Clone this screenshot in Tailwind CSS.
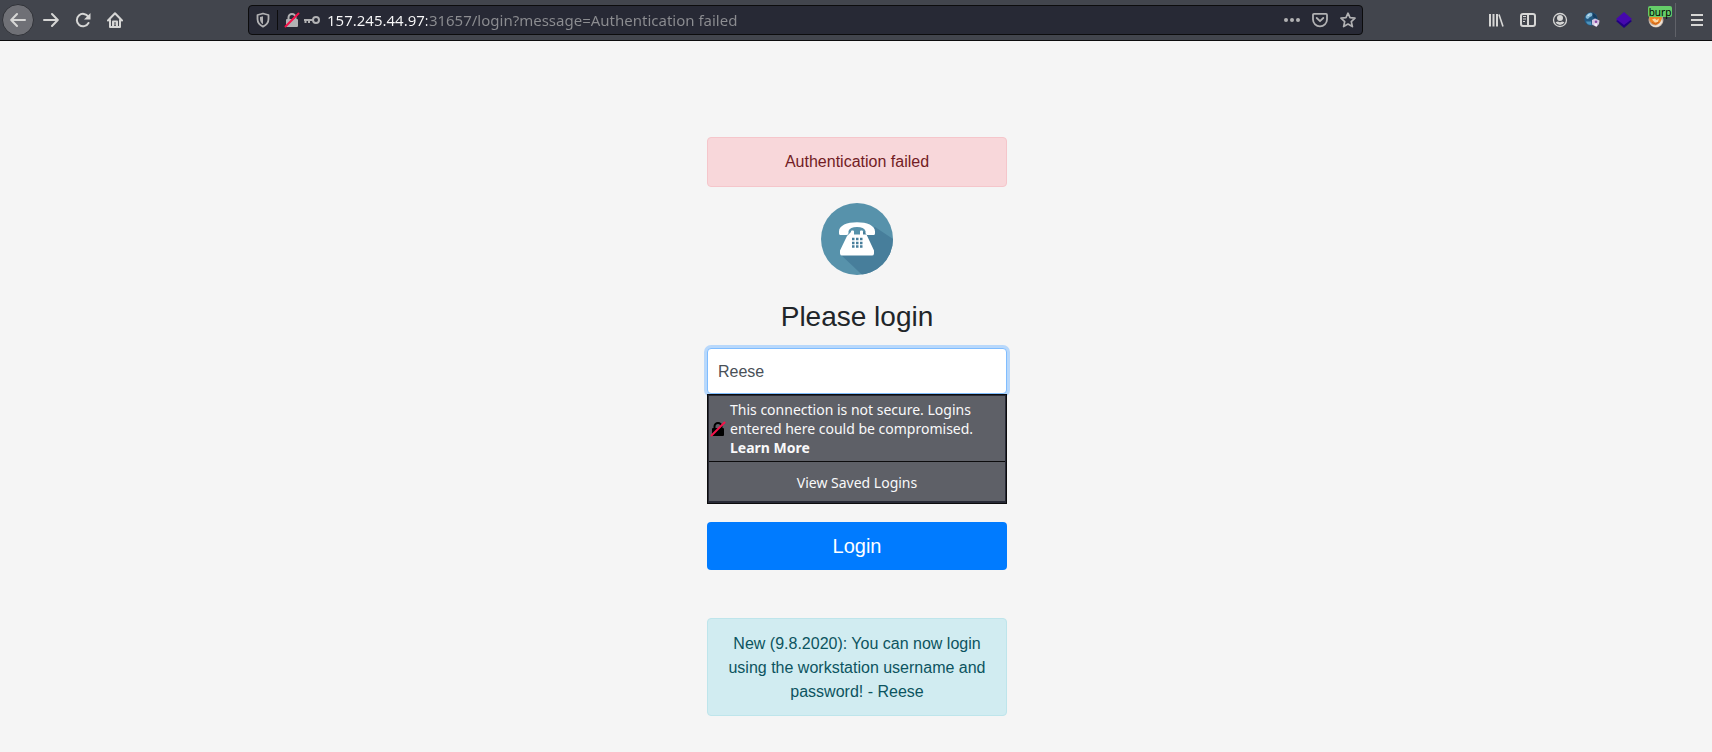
<!DOCTYPE html>
<html lang="en">
<head>
<meta charset="utf-8">
<title>Login</title>
<script src="https://cdn.jsdelivr.net/npm/@tailwindcss/browser@4"></script>
</head>
<body class="min-h-screen bg-[#f5f5f5] font-['Liberation_Sans',Arial,sans-serif] text-base text-[#212529]">
<svg class="hidden" aria-hidden="true">
  <symbol id="lock" viewBox="0 0 16 16">
    <path fill-rule="evenodd" d="M3.500 7V5.500A4.500 4.500 0 0 1 12.500 5.500V7h.5a1 1 0 0 1 1 1v6a1 1 0 0 1-1 1H3a1 1 0 0 1-1-1V8a1 1 0 0 1 1-1zm2 0h5V5.500a2.500 2.500 0 0 0-5 0z"/>
    <path d="M1.500 14.500L14.500 1.500" stroke="#f5134a" stroke-width="2" stroke-linecap="round" fill="none"/>
  </symbol>
</svg>

<header class="flex h-[41px] items-center border-b border-[#0c0c0d] bg-[#42454d] text-[#d6d6d5]">
  <nav class="flex items-center pl-0.5" aria-label="Navigation">
    <button aria-label="Back" class="mr-px flex size-8 items-center justify-center rounded-full border border-[#303238] bg-[#6f7076]">
      <svg class="size-4" viewBox="0 0 16 16" fill="none" stroke="currentColor" stroke-width="2" stroke-linecap="round" stroke-linejoin="round"><path d="M15 8H1.500M7 2L1.200 8L7 14"/></svg>
    </button>
    <button aria-label="Forward" class="flex size-8 items-center justify-center">
      <svg class="size-4" viewBox="0 0 16 16" fill="none" stroke="currentColor" stroke-width="2" stroke-linecap="round" stroke-linejoin="round"><path d="M1 8H14.500M9 2L14.800 8L9 14"/></svg>
    </button>
    <button aria-label="Reload" class="flex size-8 items-center justify-center">
      <svg class="size-4" viewBox="0 0 16 16"><path d="M13.300 4.800A6.200 6.200 0 1 0 13.500 11" fill="none" stroke="currentColor" stroke-width="2" stroke-linecap="round"/><path d="M15.500 1v6.500H9z" fill="currentColor"/></svg>
    </button>
    <button aria-label="Home" class="flex size-8 items-center justify-center">
      <svg class="size-4" viewBox="0 0 16 16" fill="none" stroke="currentColor" stroke-width="2" stroke-linecap="round" stroke-linejoin="round"><path d="M1 8.500L8 1.200L15 8.500M3 8v7h10V8"/><path d="M6 14.500V9.500h4v5" stroke-linecap="butt"/><path d="M8 11.500v1.500" stroke-width="1"/></svg>
    </button>
  </nav>

  <div class="mx-[117px] flex h-[30px] min-w-0 flex-1 items-center rounded border border-[#0c0c0d] bg-[#272935] text-[#b1b1b3]">
    <button aria-label="Tracking protection" class="ml-1.5 flex h-7 w-4 shrink-0 items-center">
      <svg class="size-4" viewBox="0 0 16 16"><path d="M8 1.500L13.500 3v4c0 3.500-2 6-5.500 7.600C4.500 13 2.500 10.500 2.500 7V3z" fill="none" stroke="currentColor" stroke-width="1.800" stroke-linejoin="round"/><path d="M8 4.200v8C6 11 5 9.300 5 7V5z" fill="currentColor"/></svg>
    </button>
    <span class="mx-1.5 h-5 w-px shrink-0 bg-[#0c0c0d]"></span>
    <button aria-label="Connection is not secure" class="flex h-7 w-4 shrink-0 items-center">
      <svg class="size-4" fill="currentColor"><use href="#lock"/></svg>
    </button>
    <button aria-label="Saved login" class="ml-1 flex h-7 w-4 shrink-0 items-center">
      <svg class="size-4" viewBox="0 0 16 16" fill="none" stroke="currentColor" stroke-width="2"><circle cx="12" cy="8" r="3"/><path d="M0 8h9M1.500 8v3M5 8v3"/></svg>
    </button>
    <input aria-label="Address" value="157.245.44.97:31657/login?message=Authentication failed" class="ml-[7px] min-w-0 flex-1 bg-[linear-gradient(to_right,#f9f9fa_100px,#8c8d91_100px)] bg-clip-text font-['Noto_Sans',sans-serif] text-[15px] text-transparent outline-none">
    <div class="mr-1.5 flex shrink-0 gap-3">
      <button aria-label="Page actions"><svg class="size-4" viewBox="0 0 16 16" fill="currentColor"><circle cx="2" cy="8" r="2"/><circle cx="8" cy="8" r="2"/><circle cx="14" cy="8" r="2"/></svg></button>
      <button aria-label="Save to Pocket"><svg class="size-4" viewBox="0 0 16 16" fill="none" stroke="currentColor" stroke-width="1.800" stroke-linecap="round" stroke-linejoin="round"><path d="M2 1.900h12a1 1 0 0 1 1 1V7.500a7 6.800 0 0 1-14 0V2.900a1 1 0 0 1 1-1z"/><path d="M4.700 6L8 9.200L11.300 6"/></svg></button>
      <button aria-label="Bookmark"><svg class="size-4" viewBox="0 0 16 16" fill="none" stroke="currentColor" stroke-width="1.700" stroke-linejoin="round"><path d="M8 1.200L10 5.700L15 6.200L11.300 9.600L12.400 14.600L8 12L3.600 14.600L4.700 9.600L1 6.200L6 5.700z"/></svg></button>
    </div>
  </div>

  <div class="flex items-center">
    <button aria-label="Library" class="flex size-8 items-center justify-center"><svg class="size-4" viewBox="0 0 16 16" fill="none" stroke="currentColor" stroke-width="2"><path d="M2 2v12.500M5.500 2v12.500M9 2v12.500" /><path d="M11 2.500L15 14.500" stroke-width="1.600"/></svg></button>
    <button aria-label="Sidebars" class="flex size-8 items-center justify-center"><svg class="size-4" viewBox="0 0 16 16" fill="none" stroke="currentColor" stroke-width="2"><rect x="1" y="2" width="14" height="12" rx="2"/><path d="M8 2v12"/><path d="M3 4.500h3M3 7h3M3 9.500h2" stroke-width="1"/></svg></button>
    <button aria-label="Account" class="flex size-8 items-center justify-center"><svg class="size-4" viewBox="0 0 16 16"><circle cx="8" cy="8" r="6.500" fill="none" stroke="currentColor" stroke-width="1.300"/><circle cx="8" cy="6" r="3" fill="currentColor"/><path d="M3.500 10.200Q5 9.500 6 9.500Q8 10.800 10 9.500Q11 9.500 12.500 10.200Q11 13 8 13T3.500 10.200z" fill="currentColor"/></svg></button>
    <button aria-label="Proxy settings" class="flex size-8 items-center justify-center"><svg class="size-4" viewBox="0 0 16 16"><circle cx="7" cy="7" r="6.700" fill="#235982"/><path d="M1.500 5Q3 1 7 .8Q9 1.500 8 4Q5 5 4 7Q2 7 1.500 5z" fill="#86b9d6"/><path d="M3 3.500Q4 2 6 2L5 4z" fill="#cfe6f2"/><path d="M9 1Q13 3 13.300 6.500L10 6Q8 4 9 1z" fill="#163c60"/><path d="M2 9.500Q4 9.500 7 9.500L7.500 13Q3 13 2 9.500z" fill="#4c93bd"/><path d="M8 8L11 6.500L15.500 8.500L15 12L12.500 15L8 12.500z" fill="#d3c4df"/><circle cx="12" cy="9.700" r="1.300" fill="#8846a5"/><path d="M10 11.500h3v2.500h-2z" fill="#f7eff8"/></svg></button>
    <button aria-label="Wappalyzer" class="flex size-8 items-center justify-center"><svg class="size-4" viewBox="0 0 16 16"><path d="M0 9L8 4L16 9L8 16z" fill="#210080"/><path d="M0 7L8 0L16 7L8 13z" fill="#4608ad"/></svg></button>
    <button aria-label="FoxyProxy: burp" class="relative flex size-8 items-center justify-center"><svg class="size-4" viewBox="0 0 16 16"><circle cx="8" cy="8" r="7.500" fill="#b9aaa0"/><path d="M1.500 4H14L13.500 8Q12 12 8 13Q3 12.500 1.500 8z" fill="#ef8525"/><path d="M4 7.500L7 6.500L8.500 8L11 6.500L10 10L7 10.500z" fill="#fbd6a3"/><path d="M1.500 10Q4 14 8 13.500Q12 12 14 7L14.500 10Q12 15 8 15Q3 15 1.500 10z" fill="#eee2d5"/><path d="M4 10.500L7.500 12L11 10" fill="none" stroke="#c9621c"/></svg>
      <span class="absolute top-0.5 right-0 flex h-[11px] w-6 items-center justify-center rounded-xs bg-[#65cc69] font-['Noto_Sans',sans-serif] text-[10px] leading-none text-black">burp</span></button>
    <span class="mx-[3px] h-[34px] w-px bg-[#606269]"></span>
    <button aria-label="Menu" class="flex h-8 w-[33px] items-center justify-center pl-0.5"><svg class="size-4" viewBox="0 0 16 16" stroke="currentColor" stroke-width="2"><path d="M2 3h12M2 8h12M2 13h12"/></svg></button>
  </div>
</header>

<main class="flex justify-center pt-24 pb-9 pl-0.5">
  <form class="flex w-[300px] flex-col text-center" onsubmit="return false">
    <div role="alert" class="rounded border border-[#f5c6cb] bg-[#f8d7da] px-5 py-3 text-[#721c24]">Authentication failed</div>
    <svg class="mt-4 size-[72px] self-center" viewBox="0 0 72 72" role="img" aria-label="Telephone">
      <clipPath id="disc"><circle cx="36" cy="36" r="36"/></clipPath>
      <circle cx="36" cy="36" r="36" fill="#5792ab"/>
      <path d="M54 24L84 44V84H54L19 51L40 30z" fill="#477e9b" clip-path="url(#disc)"/>
      <path d="M18 28.500C18 22.500 26 19.300 36 19.300S54 22.500 54 28.500V30.500Q54 32 52.500 32H46.500Q44.500 32 44.500 30V28Q43 24 36 24T27.500 28V30Q27.500 32 25.500 32H19.500Q18 32 18 30.500z" fill="#fff"/>
      <path d="M27 32L30 29V28.500Q30 27.500 31 27.500H32Q33 27.500 33 28.500V31.500H39V28.500Q39 27.500 40 27.500H41Q42 27.500 42 28.500V31.500H45.500L53 47.500V50.500Q53 52.500 51 52.500H21Q19 52.500 19 50.500V47.500L26 33z" fill="#fff"/>
      <path d="M31 36h2.500M35 36h2.500M39 36h2.500M31 40h2.500M35 40h2.500M39 40h2.500M31 43.500h2.500M35 43.500h2.500M39 43.500h2.500" stroke="#477e9b" stroke-width="2.300"/>
    </svg>
    <h1 class="mt-6 mb-3.5 text-[28px] leading-[35px]">Please login</h1>
    <input aria-label="Username" value="Reese" class="h-[46px] rounded border border-[#80bdff] bg-white px-2.5 pt-0.5 text-[#495057] ring-3 ring-[#b8d8fb] outline-none">
    <div class="relative flex h-[110px] flex-col border border-[#0c0c0d] bg-[#272935] px-px pt-px pb-0.5 font-['Noto_Sans',sans-serif] text-sm text-[#f9f9fa]">
      <div class="flex h-[66px] items-center gap-1 border-b border-[#0c0c0d] bg-[#5e6067] pl-px text-left leading-[19px]">
        <svg class="size-4 shrink-0" fill="black"><use href="#lock"/></svg>
        <p>This connection is not secure. Logins entered here could be compromised. <a href="#" class="block font-bold">Learn More</a></p>
      </div>
      <button type="button" class="flex-1 bg-[#5e6067] pt-0.5">View Saved Logins</button>
    </div>
    <button type="submit" class="mt-[18px] h-12 rounded-[4px] bg-[#007bff] text-xl text-white">Login</button>
    <div role="status" class="mt-12 rounded border border-[#bee5eb] bg-[#d1ecf1] px-4 pt-[13px] pb-[11px] text-[#0c5460]">New (9.8.2020): You can now login using the workstation username and password! - Reese</div>
  </form>
</main>
</body>
</html>
